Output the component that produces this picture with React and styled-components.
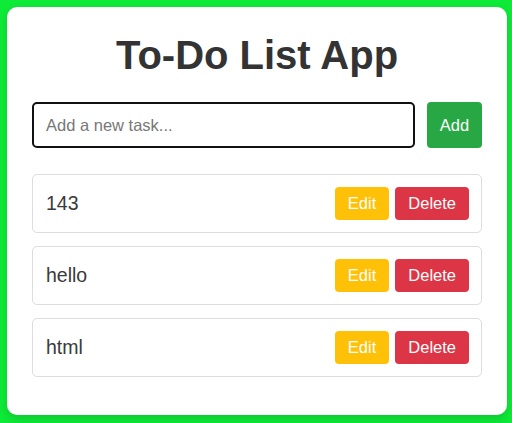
import { useState } from 'react'
import { styled, createGlobalStyle } from 'styled-components'

const initialTasks = ['143', 'hello', 'html']

function App() {
  const [tasks] = useState(initialTasks)
  const [text, setText] = useState('')

  return (
    <>
      <GlobalStyle />
      <Page>
        <Card>
          <Title>To-Do List App</Title>
          <InputRow>
            <TaskInput
              placeholder="Add a new task..."
              value={text}
              onChange={(e) => setText(e.target.value)}
            />
            <AddButton>Add</AddButton>
          </InputRow>
          <List>
            {tasks.map((task) => (
              <Item key={task}>
                <TaskText>{task}</TaskText>
                <Actions>
                  <ActionButton variant="edit">Edit</ActionButton>
                  <ActionButton variant="delete">Delete</ActionButton>
                </Actions>
              </Item>
            ))}
          </List>
        </Card>
      </Page>
    </>
  )
}

export default App

const GlobalStyle = createGlobalStyle`
  * { box-sizing: border-box; }
  html, body {
    margin: 0;
    padding: 0;
    background: #0eea38;
    font-family: 'Liberation Sans', Arial, sans-serif;
  }
`
const Page = styled.div`
  width: 512px;
  height: 423px;
  padding: 7px 5px 0 7px;
  background: #0eea38;
`
const Card = styled.div`
  width: 500px;
  background: #fff;
  border-radius: 10px;
  padding: 25px;
  box-shadow: 0 4px 10px rgba(0, 0, 0, 0.15);
`
const Title = styled.h1`
  margin: 1px 0 24px;
  text-align: center;
  font-size: 40px;
  font-weight: bold;
  color: #333;
`
const InputRow = styled.div`
  display: flex;
  gap: 12px;
  margin-bottom: 26px;
`
const TaskInput = styled.input`
  flex: 1;
  height: 46px;
  padding: 0 12px;
  border: 2px solid #111;
  border-radius: 5px;
  font-family: inherit;
  font-size: 16.5px;
  color: #333;
  outline: none;
  &::placeholder {
    color: #777;
  }
`
const AddButton = styled.button`
  height: 46px;
  width: 55px;
  border: none;
  border-radius: 4px;
  background: #28a745;
  color: #fff;
  font-family: inherit;
  font-size: 16.5px;
  cursor: pointer;
`
const List = styled.ul`
  list-style: none;
  margin: 0;
  padding: 0;
`
const Item = styled.li`
  display: flex;
  align-items: center;
  justify-content: space-between;
  height: 59px;
  padding: 0 12px 0 13px;
  margin-bottom: 13px;
  border: 1px solid #ddd;
  border-radius: 5px;
`
const TaskText = styled.span`
  font-size: 19.5px;
  color: #3a3a3a;
`
const Actions = styled.div`
  display: flex;
  gap: 6px;
`
const ActionButton = styled.button`
  height: 33px;
  padding: 0 13px;
  border: none;
  border-radius: 4px;
  font-family: inherit;
  font-size: 16.5px;
  color: #fff;
  cursor: pointer;
  background: ${(p) => (p.variant === 'edit' ? '#ffc107' : '#dc3545')};
`
